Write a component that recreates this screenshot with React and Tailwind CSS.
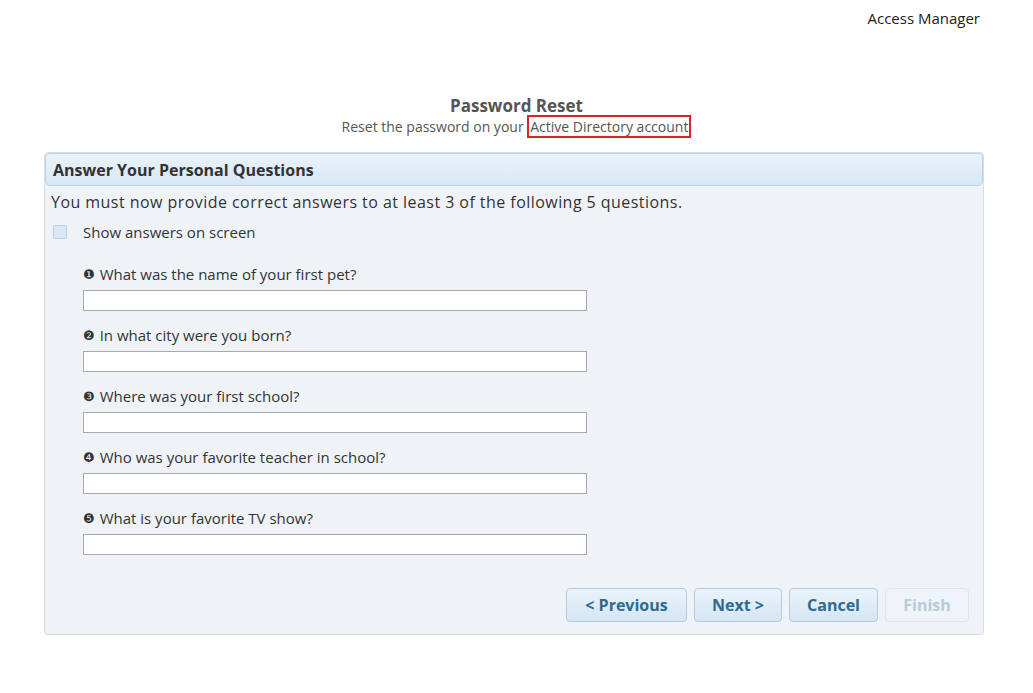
import React, { useState } from "react";

const questions = [
  { n: "❶", q: "What was the name of your first pet?" },
  { n: "❷", q: "In what city were you born?" },
  { n: "❸", q: "Where was your first school?" },
  { n: "❹", q: "Who was your favorite teacher in school?" },
  { n: "❺", q: "What is your favorite TV show?" },
];

const font = { fontFamily: '"Open Sans", "Noto Sans", "DejaVu Sans", sans-serif' };

const Button = ({ children, width, disabled }) => (
  <button
    disabled={disabled}
    className={
      "h-[34px] rounded-[4px] border text-[16px] font-bold " +
      (disabled
        ? "border-[#dde6ee] bg-[#eef4f9] text-[#b9cbd8]"
        : "border-[#b5cadb] bg-gradient-to-b from-[#eaf3fb] to-[#d5e6f4] text-[#2f6a8f]")
    }
    style={{ width }}
  >
    {children}
  </button>
);

export default function App() {
  const [show, setShow] = useState(false);
  const [answers, setAnswers] = useState(["", "", "", "", ""]);

  return (
    <div className="min-h-[693px] w-[1033px] bg-white text-[#333]" style={font}>
      <div className="flex justify-end pr-[53px] pt-[7px] text-[15px] text-[#222]">Access Manager</div>

      <div className="mt-[65px] flex flex-col items-center text-[#555]">
        <h1 className="text-[17px] font-bold leading-[22px]">Password Reset</h1>
        <p className="text-[14px] leading-[20px]">
          Reset the password on your{" "}
          <span className="border-2 border-[#d9232d] px-[1px]">Active Directory account</span>
        </p>
      </div>

      <div className="mx-[44px] mt-[15px] w-[940px] rounded-[4px] border border-[#d6dde4] bg-[#eff3f7]">
        <div className="flex h-[33px] items-center rounded-[5px] border border-[#bfd2e3] bg-gradient-to-b from-[#eaf3fb] to-[#d7e7f5] px-[7px] pt-[1px] text-[16px] font-bold text-[#333]">
          Answer Your Personal Questions
        </div>

        <p className="mt-[4px] px-[6px] text-[16px] tracking-[0.45px] text-[#333]">
          You must now provide correct answers to at least 3 of the following 5 questions.
        </p>

        <label className="mt-[7px] flex items-center gap-[16px] pl-[8px] text-[15px] text-[#333]">
          <span
            onClick={() => setShow(!show)}
            className="h-[14px] w-[14px] rounded-[2px] border border-[#bcd0e2] bg-[#dae8f5]"
          />
          Show answers on screen
        </label>

        <div className="mt-[21px] flex flex-col gap-[14px] pl-[38px]">
          {questions.map((item, i) => (
            <div key={i} className="flex flex-col gap-[6px]">
              <div className="flex items-center gap-[5px] text-[15px] leading-[20px] text-[#333]">
                <span className="text-[13px] leading-none" style={{ fontFamily: '"DejaVu Sans", sans-serif' }}>
                  {item.n}
                </span>
                {item.q}
              </div>
              <input
                type={show ? "text" : "password"}
                value={answers[i]}
                onChange={(e) => {
                  const next = [...answers];
                  next[i] = e.target.value;
                  setAnswers(next);
                }}
                className="h-[21px] w-[504px] border border-[#a9a9a9] bg-white px-1 text-[13px] outline-none"
              />
            </div>
          ))}
        </div>

        <div className="mt-[33px] mb-[12px] flex justify-end gap-[7px] pr-[14px]">
          <Button width={121}>&lt; Previous</Button>
          <Button width={88}>Next &gt;</Button>
          <Button width={89}>Cancel</Button>
          <Button width={84} disabled>
            Finish
          </Button>
        </div>
      </div>
    </div>
  );
}
